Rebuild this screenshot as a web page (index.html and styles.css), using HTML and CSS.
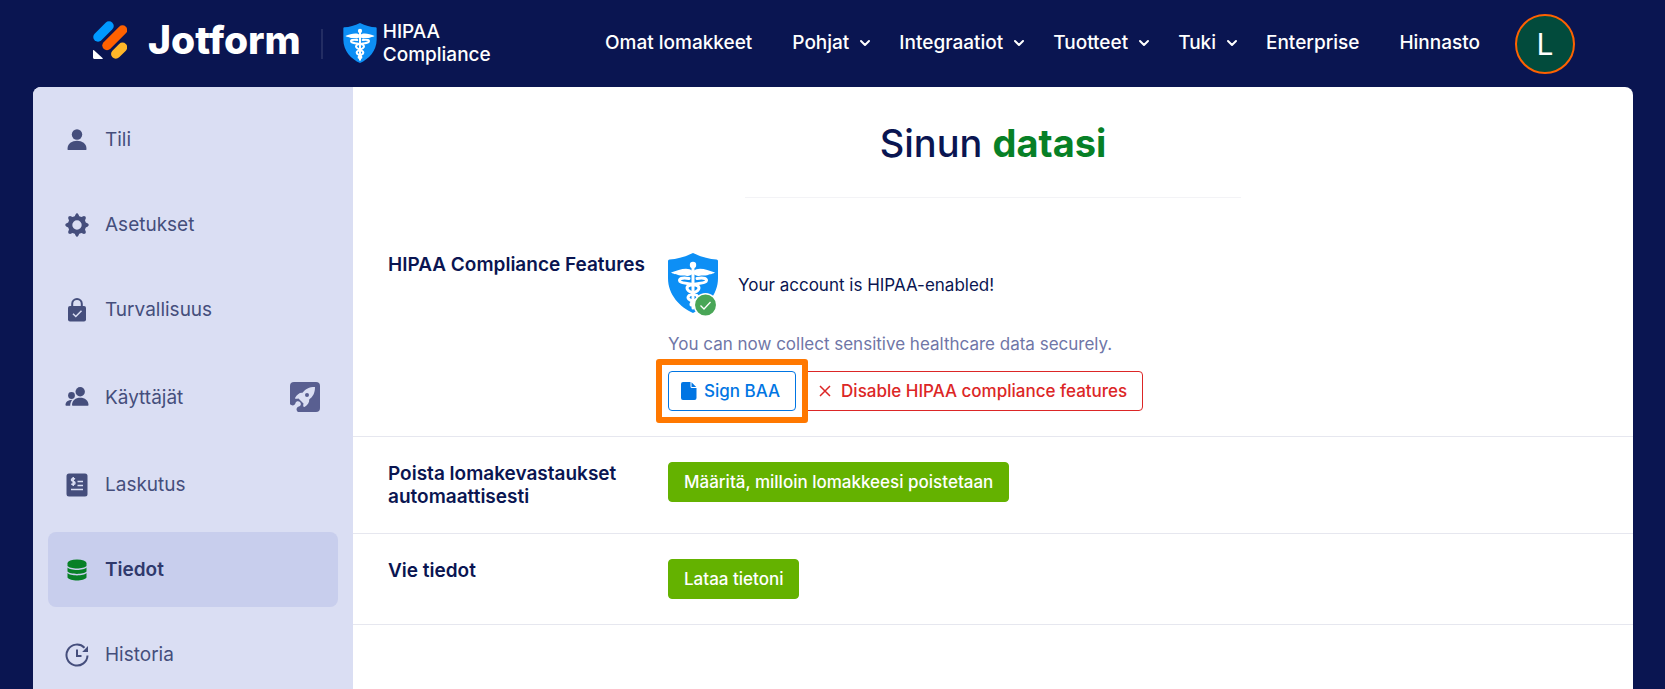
FILE: index.html
```html
<!DOCTYPE html>
<html lang="fi">
<head>
  <meta charset="UTF-8" />
  <meta name="viewport" content="width=device-width, initial-scale=1.0"/>
  <title>Jotform | Tiedot</title>
  <link rel="stylesheet" href="styles.css">
</head>
<body>

  <svg class="sprite" aria-hidden="true">
    <symbol id="hipaa" viewBox="0 0 50 60">
      <path fill="#0d8ff5" d="M25 0C33 4 41 6 48.500 6.500Q50 6.700 50 8V25C50 42 38 54 25 60C12 54 0 42 0 25V8Q0 6.700 1.500 6.500C9 6 17 4 25 0Z"/>
      <circle fill="#fff" cx="25" cy="12" r="3.200"/>
      <path fill="#fff" d="M24.500 18C20 13.500 11 16.500 3 19.500C6 21.500 9 21 10 22C13 23 16 22 19 23C21 23.500 23 22 25 20.500C27 22 29 23.500 31 23C34 22 37 23 40 22C41 21 44 21.500 47 19.500C39 16.500 30 13.500 25.500 18Z"/>
      <path fill="none" stroke="#fff" stroke-width="3" stroke-linecap="round" d="M25 14V55M21 25.500C14 24 10 26 12 28.500C15 31.500 31 30 31 35C31 40 20 40 20 44.500C20 48 28 48 27 52M29 25.500C36 24 40 26 38 28.500C35 31.500 19 30 19 35C19 40 30 40 30 44.500C30 48 22 48 23 52"/>
    </symbol>
    <symbol id="chevron" viewBox="0 0 12 8">
      <path fill="none" stroke="#fff" stroke-width="2" stroke-linecap="round" stroke-linejoin="round" d="M2 2L6 6L10 2"/>
    </symbol>
  </svg>

  <header class="header">
    <a href="#" class="logo">
      <svg class="logo-mark" viewBox="0 0 34 38" aria-hidden="true">
        <g fill="none" stroke-linecap="round" stroke-width="9.500">
          <path stroke="#0099ff" d="M5 16L16 5"/>
          <path stroke="#ff6100" d="M14 24.500L29.500 9"/>
          <path stroke="#ffb629" d="M22.800 33L29.500 26.300"/>
        </g>
        <path fill="#fff" d="M0 29.500C0 29 .6 28.800 1 29.200L9.500 37C10 37.400 9.700 38 9.200 38H1.500C.7 38 0 37.300 0 36.500Z"/>
      </svg>
      <span class="logo-text">Jotform</span>
    </a>
    <span class="divider"></span>
    <a href="#" class="hipaa-link">
      <svg class="hipaa-small" aria-hidden="true"><use href="#hipaa"/></svg>
      <span>HIPAA<br>Compliance</span>
    </a>
    <nav class="nav">
      <a href="#">Omat lomakkeet</a>
      <button type="button" class="nav-drop">Pohjat <svg class="chevron" aria-hidden="true"><use href="#chevron"/></svg></button>
      <button type="button" class="nav-drop">Integraatiot <svg class="chevron" aria-hidden="true"><use href="#chevron"/></svg></button>
      <button type="button" class="nav-drop">Tuotteet <svg class="chevron" aria-hidden="true"><use href="#chevron"/></svg></button>
      <button type="button" class="nav-drop">Tuki <svg class="chevron" aria-hidden="true"><use href="#chevron"/></svg></button>
      <a href="#">Enterprise</a>
      <a href="#">Hinnasto</a>
    </nav>
    <button type="button" class="avatar">L</button>
  </header>

  <div class="panel">
    <aside class="sidebar">
      <a href="#" class="side-item">
        <svg class="side-icon" viewBox="0 0 24 24" aria-hidden="true">
          <circle cx="12" cy="6.500" r="5.200"/>
          <path d="M2.500 21C2.500 15.500 7 12.800 12 12.800S21.500 15.500 21.500 21C21.500 21.800 21.300 22 20.500 22H3.500C2.700 22 2.500 21.800 2.500 21Z"/>
        </svg>
        Tili
      </a>
      <a href="#" class="side-item">
        <svg class="side-icon" viewBox="0 0 24 24" aria-hidden="true">
          <path fill-rule="evenodd" d="M12 .3Q13 .3 13.300 1.200L14.300 3.300L16.400 4L18.900 3Q20.900 3 20.900 5L20 7.600L20.800 9.600L22.800 10.600Q23.700 11 23.700 12T22.800 13.400L20.800 14.400L20 16.400L20.900 19Q20.900 21 18.900 21L16.400 20L14.300 20.700L13.300 22.800Q13 23.700 12 23.700T10.700 22.800L9.700 20.700L7.600 20L5.100 21Q3.100 21 3.100 19L4 16.400L3.200 14.400L1.200 13.400Q.3 13 .3 12T1.200 10.600L3.200 9.600L4 7.600L3.100 5Q3.100 3 5.100 3L7.600 4L9.700 3.300L10.700 1.200Q11 .3 12 .3ZM12 7.300A4.700 4.700 0 1 0 12 16.700A4.700 4.700 0 1 0 12 7.300Z"/>
        </svg>
        Asetukset
      </a>
      <a href="#" class="side-item">
        <svg class="side-icon" viewBox="0 0 24 24" aria-hidden="true">
          <rect x="3" y="8" width="18" height="15.500" rx="2"/>
          <path class="line" d="M7.200 9V5.800A4.800 4.800 0 0 1 16.800 5.800V9"/>
          <path class="cut" d="M8 15.700L10.800 18.500L16.500 12.700"/>
        </svg>
        Turvallisuus
      </a>
      <a href="#" class="side-item">
        <svg class="side-icon" viewBox="0 0 24 24" aria-hidden="true">
          <circle cx="15.200" cy="6.700" r="4.700"/>
          <path d="M7 20C7 15.300 10.500 12.700 15.200 12.700S23.500 15.300 23.500 20Q23.500 20.800 22.700 20.800H7.800Q7 20.800 7 20Z"/>
          <circle cx="6.500" cy="10.500" r="3.400"/>
          <path d="M.5 20C.5 17 3 15 7.300 14.800C6 16.300 5.200 18.500 5.200 20.800H1.300Q.5 20.800 .5 20Z"/>
        </svg>
        Käyttäjät
        <svg class="rocket" viewBox="0 0 30 30" aria-hidden="true">
          <rect fill="#595f91" width="30" height="30" rx="4"/>
          <path fill="#dadef3" d="M25 5C19 5 15.500 7 12.500 10.800C9.500 10.500 7 12.500 5 16C5 17 6 17 8.500 16.500L13.500 21.500C13 24 13 25 14.500 25C17.500 23 19.500 20.500 19.200 17.500C23 14.500 25 11 25 5Z"/>
          <circle fill="#595f91" cx="17" cy="13" r="2"/>
          <path fill="#dadef3" d="M0 22C2 24.500 5 23.500 5.500 21C6 19 8.500 18.500 10 20C11.500 21.500 11 24 9 24.500C6.500 25 5.500 28 8 30H0Z"/>
        </svg>
      </a>
      <a href="#" class="side-item">
        <svg class="side-icon" viewBox="0 0 24 24" aria-hidden="true">
          <rect x="1.500" y=".5" width="21" height="23" rx="2.500"/>
          <path class="cut" d="M12.500 8.500H18M12.500 12.500H18M6 16.500H18M10 6C8 5 6.300 5.700 6.500 7C6.800 8.500 10 8.200 10 10C10 11.500 8 11.800 6.300 10.800M8.200 4V13"/>
        </svg>
        Laskutus
      </a>
      <a href="#" class="side-item active">
        <svg class="side-icon" viewBox="0 0 24 24" aria-hidden="true">
          <ellipse cx="12" cy="5" rx="9.500" ry="3.500"/>
          <path d="M2.500 5C5 8.500 19 8.500 21.500 5V8C19 11.300 5 11.300 2.500 8ZM2.500 9.500C5 12.800 19 12.800 21.500 9.500V13.500C19 16.700 5 16.700 2.500 13.500ZM2.500 15C5 18.200 19 18.200 21.500 15V19.500C19 23.500 5 23.500 2.500 19.500Z"/>
        </svg>
        Tiedot
      </a>
      <a href="#" class="side-item">
        <svg class="side-icon" viewBox="0 0 24 24" aria-hidden="true">
          <path class="line" d="M22.500 12.500A10.500 10.500 0 1 1 19.500 4.700M12 6.500V13H16.500"/>
          <path d="M23 3V9H17.200Z"/>
        </svg>
        Historia
      </a>
    </aside>

    <main class="content">
      <h1>Sinun <strong>datasi</strong></h1>

      <section class="row">
        <h2>HIPAA Compliance Features</h2>
        <div class="row-body">
          <div class="status">
            <svg class="hipaa-big" viewBox="0 0 50 64" aria-hidden="true">
              <use href="#hipaa" width="50" height="60"/>
              <circle fill="#49a657" stroke="#fff" stroke-width="1.500" cx="37.500" cy="52" r="11.200"/>
              <path fill="none" stroke="#fff" stroke-width="1.300" d="M32.500 52.500L36 56L42.500 49"/>
            </svg>
            <p>Your account is HIPAA-enabled!</p>
          </div>
          <p class="note">You can now collect sensitive healthcare data securely.</p>
          <div class="actions">
            <div class="spotlight">
              <button type="button" class="btn btn-sign">
                <svg class="file-icon" viewBox="0 0 16 18" aria-hidden="true">
                  <path fill="#0075e3" d="M2 0H9.500V4.500Q9.500 6 11 6H15.500V16Q15.500 18 13.500 18H2Q0 18 0 16V2Q0 0 2 0ZM10.500 .3L15.200 5H10.500Z"/>
                </svg>
                Sign BAA
              </button>
            </div>
            <button type="button" class="btn btn-disable">
              <svg class="x-icon" viewBox="0 0 12 12" aria-hidden="true">
                <path fill="none" stroke="#dc2626" stroke-width="1.500" d="M1 1L11 11M11 1L1 11"/>
              </svg>
              Disable HIPAA compliance features
            </button>
          </div>
        </div>
      </section>

      <section class="row">
        <h2>Poista lomakevastaukset automaattisesti</h2>
        <div class="row-body">
          <button type="button" class="btn btn-green">Määritä, milloin lomakkeesi poistetaan</button>
        </div>
      </section>

      <section class="row">
        <h2>Vie tiedot</h2>
        <div class="row-body">
          <button type="button" class="btn btn-green">Lataa tietoni</button>
        </div>
      </section>
    </main>
  </div>

</body>
</html>
```
FILE: styles.css
```css
* {
  margin: 0;
  padding: 0;
  box-sizing: border-box;
}

body {
  font-family: 'Inter', 'Liberation Sans', sans-serif;
  background: #0a1551;
  color: #0a1551;
  min-height: 100vh;
  display: flex;
  flex-direction: column;
}

a {
  color: inherit;
  text-decoration: none;
}

button {
  font-family: inherit;
  cursor: pointer;
}

.sprite {
  display: none;
}

/* header */
.header {
  display: flex;
  align-items: center;
  height: 87px;
  padding: 0 90px 0 93px;
  color: #fff;
  white-space: nowrap;
}

.logo {
  display: flex;
  align-items: center;
  gap: 21px;
  margin-bottom: 8px;
}

.logo-mark {
  width: 34px;
  height: 38px;
}

.logo-text {
  font-size: 39px;
  font-weight: 800;
  line-height: 40px;
}

.divider {
  width: 2px;
  height: 30px;
  margin: 0 20px;
  background: #232d63;
}

.hipaa-link {
  display: flex;
  align-items: center;
  gap: 6px;
  margin-bottom: 2px;
  font-size: 19px;
  font-weight: 500;
  line-height: 23px;
}

.hipaa-small {
  width: 34px;
  height: 40px;
}

.nav {
  display: flex;
  align-items: center;
  margin: 0 0 2px auto;
  font-size: 19px;
  font-weight: 500;
}

.nav a {
  margin-right: 40px;
}

.nav-drop {
  display: flex;
  align-items: center;
  gap: 10px;
  margin-right: 28px;
  background: none;
  border: none;
  color: inherit;
  font-size: inherit;
  font-weight: inherit;
}

.nav a:last-child {
  margin-right: 35px;
}

.chevron {
  width: 12px;
  height: 8px;
}

.avatar {
  width: 60px;
  height: 60px;
  background: #024b3c;
  border: 2px solid #ff6100;
  border-radius: 50%;
  color: #fff;
  font-size: 30px;
}

/* panel */
.panel {
  flex: 1;
  display: flex;
  margin: 0 32px 0 33px;
  background: #fff;
  border-radius: 8px 8px 0 0;
  overflow: hidden;
}

.sidebar {
  display: flex;
  flex-direction: column;
  gap: 10px;
  width: 320px;
  padding: 15px 15px 0;
  background: #dadef3;
}

.side-item {
  display: flex;
  align-items: center;
  gap: 16px;
  padding: 25px 18px 25px 17px;
  border-radius: 8px;
  color: #454e7c;
  font-size: 19px;
  line-height: 25px;
}

.side-item.active {
  background: #c8ceed;
  color: #2f396c;
  font-weight: 600;
}

.side-icon {
  width: 24px;
  height: 24px;
  fill: #454e7c;
}

.side-item.active .side-icon {
  fill: #078026;
}

.side-icon .line {
  fill: none;
  stroke: #454e7c;
  stroke-width: 2;
}

.side-icon .cut {
  fill: none;
  stroke: #dadef3;
  stroke-width: 1.5;
}

.rocket {
  width: 30px;
  height: 30px;
  margin-left: auto;
}

.content {
  flex: 1;
}

.content h1 {
  width: 496px;
  margin: 0 auto 30px;
  padding: 32px 0 30px;
  border-bottom: 1px solid #f3f3f6;
  font-size: 38px;
  font-weight: 500;
  line-height: 48px;
  text-align: center;
}

.content h1 strong {
  color: #078026;
  font-weight: 700;
}

.row {
  display: flex;
  padding: 25px 35px;
  border-bottom: 1px solid #e6e7ef;
}

.row h2 {
  width: 280px;
  font-size: 19px;
  font-weight: 600;
  line-height: 23px;
}

.status {
  display: flex;
  align-items: center;
  gap: 20px;
  font-size: 17px;
}

.hipaa-big {
  width: 50px;
  height: 64px;
}

.note {
  margin: 15px 0;
  color: #6f76a7;
  font-size: 17px;
  line-height: 24px;
}

.actions {
  display: flex;
}

.btn {
  display: flex;
  align-items: center;
  height: 40px;
  padding: 0 15px;
  border: 1px solid;
  border-radius: 4px;
  background: #fff;
  font-size: 17px;
  font-weight: 500;
  white-space: nowrap;
}

/* orange frame drawn around the button */
.spotlight {
  position: relative;
}

.spotlight::after {
  content: '';
  position: absolute;
  inset: -12px;
  border: 6px solid #ff7800;
  border-radius: 3px;
  box-shadow: inset 0 0 0 6px #fff;
  pointer-events: none;
}

.btn-sign {
  gap: 7px;
  padding-left: 12px;
  border-color: #0075e3;
  color: #0075e3;
}

.file-icon {
  width: 16px;
  height: 18px;
}

.btn-disable {
  gap: 10px;
  padding-left: 22px;
  border-color: #dc2626;
  color: #dc2626;
}

.x-icon {
  width: 12px;
  height: 12px;
}

.btn-green {
  border-color: #64b200;
  background: #64b200;
  color: #fff;
}
```
